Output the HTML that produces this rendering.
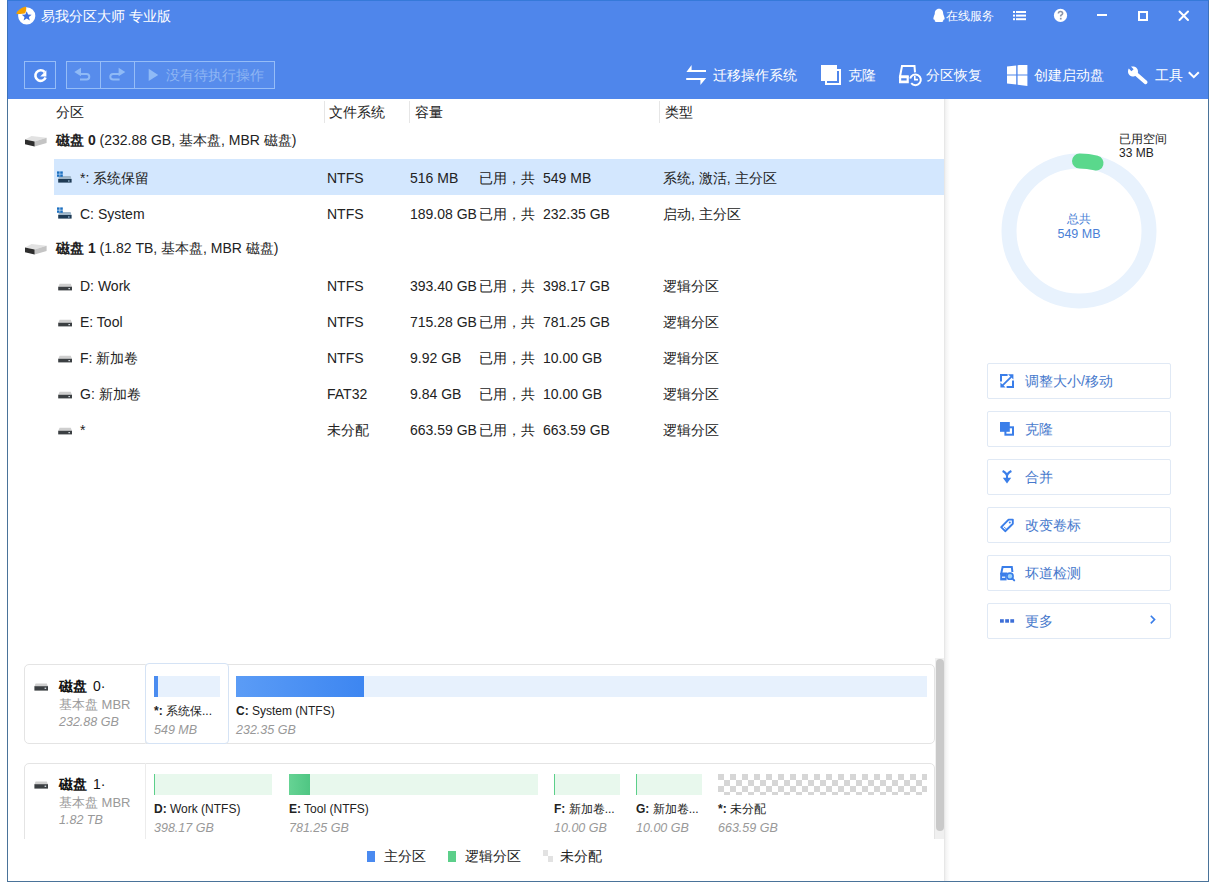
<!DOCTYPE html>
<html><head><meta charset="utf-8">
<style>
*{box-sizing:border-box;margin:0;padding:0}
html,body{width:1216px;height:889px;overflow:hidden;background:#fff;font-family:"Liberation Sans",sans-serif;color:#222;position:relative}
.a{position:absolute;white-space:nowrap;line-height:1}
#frame{position:absolute;left:7px;top:0;width:1202px;height:882px;border:1px solid #4a7399;border-top:none;background:#fff}
#hdr{position:absolute;left:7px;top:0;width:1202px;height:99px;background:#4f86eb;border-left:1px solid #3b72bb;border-right:1px solid #3b72bb;border-top:1px solid #3579d9}
.wt{color:#fff}
.tb{position:absolute;border:1px solid #96bdf7;height:28px;top:61px}
.col{font-size:14px;color:#222;top:105px}
.sep{position:absolute;top:101px;width:1px;height:22px;background:#e6e6e6}
.row{font-size:14px;color:#222}
.act{position:absolute;left:987px;width:184px;height:36px;border:1px solid #e0e9f5;border-radius:2px;background:#fff}
.act .t{position:absolute;left:37px;top:10px;font-size:14px;color:#4779cc;line-height:1;white-space:nowrap}
.card{position:absolute;border:1px solid #e4e4e4;border-radius:5px;background:#fff}
.bar{position:absolute;height:21px}
.pl{font-size:12px;color:#222}
.ps{font-size:12.5px;color:#999;font-style:italic}
</style></head><body>
<div id="frame"></div>
<div id="hdr"></div>

<!-- title bar -->
<div class="a wt" style="left:41px;top:9px;font-size:14px">易我分区大师 专业版</div>
<div class="a wt" style="left:946px;top:10px;font-size:12px">在线服务</div>

<!-- toolbar -->
<div class="tb" style="left:24px;width:32px"></div>
<div class="tb" style="left:66px;width:209px;background:rgba(255,255,255,0.05)"></div>
<div class="a" style="left:100px;top:61px;width:1px;height:28px;background:#96bdf7"></div>
<div class="a" style="left:134px;top:61px;width:1px;height:28px;background:#96bdf7"></div>
<div class="a" style="left:166px;top:68px;font-size:14px;color:#8fb6f3">没有待执行操作</div>

<div class="a wt" style="left:713px;top:68px;font-size:14px">迁移操作系统</div>
<div class="a wt" style="left:848px;top:68px;font-size:14px">克隆</div>
<div class="a wt" style="left:926px;top:68px;font-size:14px">分区恢复</div>
<div class="a wt" style="left:1034px;top:68px;font-size:14px">创建启动盘</div>
<div class="a wt" style="left:1155px;top:68px;font-size:14px">工具</div>


<!-- logo -->
<svg class="a" style="left:14px;top:4px" width="26" height="24" viewBox="0 0 26 24">
 <circle cx="12.7" cy="11.9" r="8.6" fill="#fff"/>
 <path d="M2.2 9.8 C3.5 6.2 7.5 3.2 12.0 2.4 C12.6 5.2 12.2 7.8 10.6 9.6 C8.0 10.2 4.8 10.2 2.2 9.8Z" fill="#f5a000"/>
 <path d="M12.7 7.2 L14.1 10.6 L17.6 10.8 L14.9 13.1 L15.8 16.6 L12.7 14.6 L9.6 16.6 L10.5 13.1 L7.8 10.8 L11.3 10.6Z" fill="#3d6fe0"/>
</svg>
<!-- QQ -->
<svg class="a" style="left:932px;top:8px" width="14" height="15" viewBox="0 0 14 15">
 <path d="M7 0.8 C10 0.8 11.2 3.2 11.2 5.6 C11.2 6.6 11.9 7.6 12.4 9.2 C12.9 10.8 12.4 12 11.8 11.4 C11.4 12.4 10.8 13 10.4 13.4 L11.6 14 L2.4 14 L3.6 13.4 C3.2 13 2.6 12.4 2.2 11.4 C1.6 12 1.1 10.8 1.6 9.2 C2.1 7.6 2.8 6.6 2.8 5.6 C2.8 3.2 4 0.8 7 0.8Z" fill="#fff"/>
</svg>
<!-- list -->
<svg class="a" style="left:1012px;top:10px" width="16" height="12" viewBox="0 0 16 12">
 <rect x="1" y="1" width="2" height="2" fill="#fff"/><rect x="4" y="1" width="10" height="2" fill="#fff"/>
 <rect x="1" y="4.6" width="2" height="2" fill="#fff"/><rect x="4" y="4.6" width="10" height="2" fill="#fff"/>
 <rect x="1" y="8.2" width="2" height="2" fill="#fff"/><rect x="4" y="8.2" width="10" height="2" fill="#fff"/>
</svg>
<!-- help -->
<svg class="a" style="left:1052px;top:7px" width="17" height="17" viewBox="0 0 17 17">
 <circle cx="8.5" cy="8.4" r="6.6" fill="#fff"/>
 <path d="M6.4 6.6 C6.4 5.2 7.3 4.5 8.5 4.5 C9.8 4.5 10.6 5.3 10.6 6.4 C10.6 7.6 9.2 7.9 8.7 8.8 L8.7 9.6" fill="none" stroke="#8a94a8" stroke-width="1.6"/>
 <rect x="7.9" y="10.8" width="1.7" height="1.7" fill="#8a94a8"/>
</svg>
<!-- min max close -->
<div class="a" style="left:1097px;top:14px;width:10px;height:2px;background:#fff"></div>
<div class="a" style="left:1138px;top:11px;width:10px;height:10px;border:2px solid #fff"></div>
<svg class="a" style="left:1177px;top:9px" width="14" height="14" viewBox="0 0 14 14">
 <path d="M2.5 2.5 L11 11 M11 2.5 L2.5 11" stroke="#fff" stroke-width="2" stroke-linecap="round"/>
</svg>

<!-- refresh -->
<svg class="a" style="left:32px;top:67px" width="17" height="17" viewBox="0 0 17 17">
 <path d="M13.6 10.6 A5.3 5.3 0 1 1 12.6 5.0" fill="none" stroke="#fff" stroke-width="2.6"/>
 <path d="M14.4 3.2 L14.4 9.6 L8.2 9.6Z" fill="#fff"/>
</svg>
<!-- undo redo -->
<svg class="a" style="left:66px;top:61px" width="100" height="28" viewBox="0 0 100 28">
 <path d="M8.3 11 L15 6.8 L15 15.2Z" fill="#8fbaf6"/>
 <path d="M13 13 L20.5 13 A2.8 2.8 0 0 1 20.5 18.6 L14 18.6" fill="none" stroke="#8fbaf6" stroke-width="2"/>
 <path d="M59.3 11 L52.6 6.8 L52.6 15.2Z" fill="#8fbaf6"/>
 <path d="M54.6 13 L47.1 13 A2.8 2.8 0 0 0 47.1 18.6 L53.6 18.6" fill="none" stroke="#8fbaf6" stroke-width="2"/>
 <path d="M82.7 7.7 L92.2 13.9 L82.7 20Z" fill="#8fbaf6"/>
</svg>

<!-- migrate -->
<svg class="a" style="left:686px;top:64px" width="21" height="22" viewBox="686 64 21 22">
 <path d="M686.4 72 L691.6 65 L691.6 70 L706 70 L706 72Z M686.2 78 L706.2 78 L700.4 85 L700.4 80 L686.2 80Z" fill="#fff"/>
</svg>
<!-- clone -->
<svg class="a" style="left:820px;top:64px" width="22" height="22" viewBox="820 64 22 22">
 <rect x="826" y="70" width="14" height="14" fill="none" stroke="#fff" stroke-width="2"/>
 <rect x="821" y="65" width="16" height="16" fill="#fff"/>
</svg>
<!-- recovery -->
<svg class="a" style="left:897px;top:63px" width="26" height="25" viewBox="897 63 26 25">
 <path d="M908.5 76.5 L900 76.5 L902 66 L914.5 66 L915 72.4" fill="none" stroke="#fff" stroke-width="2"/>
 <path d="M899 75.6 L908.8 75.6 L908.8 83.2 L899 83.2Z M901.2 78.2 L901.2 80.6 L906.6 80.6 L906.6 78.2Z" fill="#fff" fill-rule="evenodd"/>
 <path d="M910.2 78.4 A5.4 5.4 0 1 1 911.2 83.2" fill="none" stroke="#fff" stroke-width="2"/>
 <path d="M914.8 76 L914.8 79.6 L918 79.6" fill="none" stroke="#fff" stroke-width="1.6"/>
</svg>
<!-- windows -->
<svg class="a" style="left:1007px;top:65px" width="21" height="21" viewBox="0 0 21 21">
 <path d="M0 1.6 L9.2 0.4 L9.2 9.4 L0 9.4Z M10.6 0.2 L20.4 -1 L20.4 9.4 L10.6 9.4Z M0 10.6 L9.2 10.6 L9.2 19.6 L0 18.4Z M10.6 10.6 L20.4 10.6 L20.4 21 L10.6 19.8Z" fill="#fff"/>
</svg>
<!-- wrench -->
<svg class="a" style="left:1126px;top:64px" width="24" height="22" viewBox="1126 64 24 22">
 <path d="M1135.5 73.5 L1145.6 82.2" stroke="#fff" stroke-width="3.8" stroke-linecap="round"/>
 <path d="M1133 66.4 C1135.9 66.4 1138 68.6 1138 71.4 C1138 74.2 1135.9 76.4 1133 76.4 C1130.1 76.4 1128 74.2 1128 71.4 C1128 70.2 1128.3 69.4 1128.8 68.6 L1131.4 71.2 L1133.6 69.2 L1131 66.6 C1131.6 66.5 1132.3 66.4 1133 66.4Z" fill="#fff"/>
</svg>
<!-- chevron -->
<svg class="a" style="left:1187px;top:70px" width="14" height="10" viewBox="0 0 14 10">
 <path d="M1.8 2.2 L6.8 7.2 L11.8 2.2" fill="none" stroke="#fff" stroke-width="2"/>
</svg>

<!-- column headers -->
<div class="a col" style="left:56px">分区</div>
<div class="sep" style="left:324px"></div>
<div class="a col" style="left:329px">文件系统</div>
<div class="sep" style="left:409px"></div>
<div class="a col" style="left:415px">容量</div>
<div class="sep" style="left:659px"></div>
<div class="a col" style="left:665px">类型</div>

<!-- selected row -->
<div class="a" style="left:54px;top:159px;width:890px;height:36px;background:#d3e7fe"></div>

<!-- disk 0 -->
<div class="a row" style="left:56px;top:133px"><b>磁盘 0</b> (232.88 GB, 基本盘, MBR 磁盘)</div>
<div class="a row" style="left:80px;top:171px">*: 系统保留</div>
<div class="a row" style="left:327px;top:171px">NTFS</div>
<div class="a row" style="left:410px;top:171px">516 MB</div>
<div class="a row" style="left:479px;top:171px">已用，共</div>
<div class="a row" style="left:543px;top:171px">549 MB</div>
<div class="a row" style="left:663px;top:171px">系统, 激活, 主分区</div>

<div class="a row" style="left:80px;top:207px">C: System</div>
<div class="a row" style="left:327px;top:207px">NTFS</div>
<div class="a row" style="left:410px;top:207px">189.08 GB</div>
<div class="a row" style="left:479px;top:207px">已用，共</div>
<div class="a row" style="left:543px;top:207px">232.35 GB</div>
<div class="a row" style="left:663px;top:207px">启动, 主分区</div>

<div class="a row" style="left:56px;top:241px"><b>磁盘 1</b> (1.82 TB, 基本盘, MBR 磁盘)</div>

<div class="a row" style="left:80px;top:279px">D: Work</div>
<div class="a row" style="left:327px;top:279px">NTFS</div>
<div class="a row" style="left:410px;top:279px">393.40 GB</div>
<div class="a row" style="left:479px;top:279px">已用，共</div>
<div class="a row" style="left:543px;top:279px">398.17 GB</div>
<div class="a row" style="left:663px;top:279px">逻辑分区</div>

<div class="a row" style="left:80px;top:315px">E: Tool</div>
<div class="a row" style="left:327px;top:315px">NTFS</div>
<div class="a row" style="left:410px;top:315px">715.28 GB</div>
<div class="a row" style="left:479px;top:315px">已用，共</div>
<div class="a row" style="left:543px;top:315px">781.25 GB</div>
<div class="a row" style="left:663px;top:315px">逻辑分区</div>

<div class="a row" style="left:80px;top:351px">F: 新加卷</div>
<div class="a row" style="left:327px;top:351px">NTFS</div>
<div class="a row" style="left:410px;top:351px">9.92 GB</div>
<div class="a row" style="left:479px;top:351px">已用，共</div>
<div class="a row" style="left:543px;top:351px">10.00 GB</div>
<div class="a row" style="left:663px;top:351px">逻辑分区</div>

<div class="a row" style="left:80px;top:387px">G: 新加卷</div>
<div class="a row" style="left:327px;top:387px">FAT32</div>
<div class="a row" style="left:410px;top:387px">9.84 GB</div>
<div class="a row" style="left:479px;top:387px">已用，共</div>
<div class="a row" style="left:543px;top:387px">10.00 GB</div>
<div class="a row" style="left:663px;top:387px">逻辑分区</div>

<div class="a row" style="left:80px;top:423px">*</div>
<div class="a row" style="left:327px;top:423px">未分配</div>
<div class="a row" style="left:410px;top:423px">663.59 GB</div>
<div class="a row" style="left:479px;top:423px">已用，共</div>
<div class="a row" style="left:543px;top:423px">663.59 GB</div>
<div class="a row" style="left:663px;top:423px">逻辑分区</div>


<!-- list icons -->
<svg class="a" style="left:24px;top:135px" width="24" height="12" viewBox="24 135 24 12">
 <path d="M25 139.4 L31.5 136 L46.6 137.8 L34.6 141.4Z" fill="#e2e2e2"/>
 <path d="M34.6 141.4 L46.6 137.8 L46.6 143 L34.6 146.4Z" fill="#c4c4c4"/>
 <path d="M25 139.4 L34.6 141.4 L34.6 146.4 L25 144.2Z" fill="#2e2e2e"/>
</svg>
<svg class="a" style="left:24px;top:243px" width="24" height="12" viewBox="24 135 24 12">
 <path d="M25 139.4 L31.5 136 L46.6 137.8 L34.6 141.4Z" fill="#e2e2e2"/>
 <path d="M34.6 141.4 L46.6 137.8 L46.6 143 L34.6 146.4Z" fill="#c4c4c4"/>
 <path d="M25 139.4 L34.6 141.4 L34.6 146.4 L25 144.2Z" fill="#2e2e2e"/>
</svg>
<svg class="a" style="left:56px;top:171px" width="17" height="14" viewBox="0 0 17 14">
 <path d="M3 5 L14.6 5 L15.6 8.2 L2.2 8.2Z" fill="#9fb6c9"/>
 <rect x="2.2" y="8" width="13.4" height="3.6" fill="#1f3b55"/>
 <rect x="12" y="9.4" width="1.6" height="1.2" fill="#9fc0dc"/>
 <rect x="1" y="0.4" width="2.6" height="2.4" fill="#1b6fc0"/><rect x="4.2" y="0.4" width="2.6" height="2.4" fill="#1b6fc0"/>
 <rect x="1" y="3.4" width="2.6" height="2.4" fill="#1b6fc0"/><rect x="4.2" y="3.4" width="2.6" height="2.4" fill="#1b6fc0"/>
</svg>
<svg class="a" style="left:56px;top:207px" width="17" height="14" viewBox="0 0 17 14">
 <path d="M3 5 L14.6 5 L15.6 8.2 L2.2 8.2Z" fill="#9fb6c9"/>
 <rect x="2.2" y="8" width="13.4" height="3.6" fill="#1f3b55"/>
 <rect x="12" y="9.4" width="1.6" height="1.2" fill="#9fc0dc"/>
 <rect x="1" y="0.4" width="2.6" height="2.4" fill="#1b6fc0"/><rect x="4.2" y="0.4" width="2.6" height="2.4" fill="#1b6fc0"/>
 <rect x="1" y="3.4" width="2.6" height="2.4" fill="#1b6fc0"/><rect x="4.2" y="3.4" width="2.6" height="2.4" fill="#1b6fc0"/>
</svg>
<svg class="a" style="left:57px;top:283px" width="16" height="10" viewBox="0 0 16 10">
 <path d="M2.6 0.8 L13.8 0.8 L15 4 L1.2 4Z" fill="#cfcfcf"/>
 <rect x="1.2" y="3.8" width="13.8" height="3.6" fill="#3b3f42"/>
 <rect x="11.4" y="5" width="1.6" height="1.2" fill="#cfd6dc"/>
</svg>
<svg class="a" style="left:57px;top:319px" width="16" height="10" viewBox="0 0 16 10">
 <path d="M2.6 0.8 L13.8 0.8 L15 4 L1.2 4Z" fill="#cfcfcf"/>
 <rect x="1.2" y="3.8" width="13.8" height="3.6" fill="#3b3f42"/>
 <rect x="11.4" y="5" width="1.6" height="1.2" fill="#cfd6dc"/>
</svg>
<svg class="a" style="left:57px;top:355px" width="16" height="10" viewBox="0 0 16 10">
 <path d="M2.6 0.8 L13.8 0.8 L15 4 L1.2 4Z" fill="#cfcfcf"/>
 <rect x="1.2" y="3.8" width="13.8" height="3.6" fill="#3b3f42"/>
 <rect x="11.4" y="5" width="1.6" height="1.2" fill="#cfd6dc"/>
</svg>
<svg class="a" style="left:57px;top:391px" width="16" height="10" viewBox="0 0 16 10">
 <path d="M2.6 0.8 L13.8 0.8 L15 4 L1.2 4Z" fill="#cfcfcf"/>
 <rect x="1.2" y="3.8" width="13.8" height="3.6" fill="#3b3f42"/>
 <rect x="11.4" y="5" width="1.6" height="1.2" fill="#cfd6dc"/>
</svg>
<svg class="a" style="left:57px;top:427px" width="16" height="10" viewBox="0 0 16 10">
 <path d="M2.6 0.8 L13.8 0.8 L15 4 L1.2 4Z" fill="#cfcfcf"/>
 <rect x="1.2" y="3.8" width="13.8" height="3.6" fill="#3b3f42"/>
 <rect x="11.4" y="5" width="1.6" height="1.2" fill="#cfd6dc"/>
</svg>

<!-- right panel divider -->
<div class="a" style="left:944px;top:99px;width:6px;height:782px;background:linear-gradient(90deg,#e2e2e2,#f4f4f4 30%,#fff)"></div>

<!-- donut -->
<div class="a" style="left:1119px;top:133px;font-size:12px;color:#222">已用空间</div>
<div class="a" style="left:1119px;top:147px;font-size:12px;color:#222">33 MB</div>
<svg class="a" style="left:1000px;top:152px" width="158" height="158">
 <circle cx="79" cy="79" r="70" fill="none" stroke="#e8f2fd" stroke-width="15"/>
 <path d="M79.5 9 A70 70 0 0 1 96 11.1" fill="none" stroke="#5ad88c" stroke-width="15" stroke-linecap="round"/>
</svg>
<div class="a" style="left:1040px;top:213px;width:78px;text-align:center;font-size:12px;color:#4a7fd6">总共</div>
<div class="a" style="left:1040px;top:228px;width:78px;text-align:center;font-size:12.5px;color:#4a7fd6">549 MB</div>

<!-- action buttons -->
<div class="act" style="top:363px"><div class="t">调整大小/移动</div></div>
<div class="act" style="top:411px"><div class="t">克隆</div></div>
<div class="act" style="top:459px"><div class="t">合并</div></div>
<div class="act" style="top:507px"><div class="t">改变卷标</div></div>
<div class="act" style="top:555px"><div class="t">坏道检测</div></div>
<div class="act" style="top:603px"><div class="t">更多</div></div>


<!-- action icons -->
<svg class="a" style="left:999px;top:373px" width="16" height="16" viewBox="999 373 16 16">
 <path d="M1007.6 375 L1001 375 L1001 381.6 M1006.6 387 L1013 387 L1013 380.6" fill="none" stroke="#3a7ee9" stroke-width="2"/>
 <path d="M1002.6 385.4 L1011.2 376.8" stroke="#3a7ee9" stroke-width="1.8"/>
 <path d="M1013.4 374.2 L1013.4 379.6 L1008 374.2Z M1000.4 387.6 L1000.4 382.4 L1005.6 387.6Z" fill="#3a7ee9"/>
</svg>
<svg class="a" style="left:999px;top:421px" width="16" height="16" viewBox="999 421 16 16">
 <rect x="1005.4" y="427.3" width="7.6" height="7.4" fill="none" stroke="#3a7ee9" stroke-width="2"/>
 <rect x="1000" y="422" width="9.8" height="9.8" fill="#3a7ee9"/>
</svg>
<svg class="a" style="left:1000px;top:469px" width="14" height="16" viewBox="1000 469 14 16">
 <path d="M1002.6 471 C1004.6 472 1007 473.6 1007 476.6 L1007 479.4 M1011.4 471 C1009.4 472 1007 473.6 1007 476.6" fill="none" stroke="#3a7ee9" stroke-width="2"/>
 <path d="M1002.8 477.8 L1011.2 477.8 L1007 483.6Z" fill="#3a7ee9"/>
</svg>
<svg class="a" style="left:999px;top:517px" width="16" height="16" viewBox="999 517 16 16">
 <path d="M1008.6 519.6 L1012.8 519.6 L1012.8 523.8 L1005.2 531.2 L1001.2 527.2Z" fill="none" stroke="#3a7ee9" stroke-width="1.9" stroke-linejoin="round"/>
 <circle cx="1009.8" cy="522.6" r="1" fill="#3a7ee9"/>
 <path d="M1004 526.8 L1006 528.8" stroke="#3a7ee9" stroke-width="1"/>
</svg>
<svg class="a" style="left:999px;top:565px" width="17" height="17" viewBox="999 565 17 17">
 <path d="M1007.4 573.6 L1001.2 573.6 L1002.6 567 L1011.8 567 L1012.4 572" fill="none" stroke="#3a7ee9" stroke-width="2"/>
 <path d="M1000.2 573 L1006.6 573 L1006.6 580.4 L1000.2 580.4Z" fill="#3a7ee9"/>
 <rect x="1002" y="576.6" width="3.2" height="1.2" fill="#fff"/>
 <circle cx="1010" cy="576.2" r="3.1" fill="#9ed4fa" stroke="#3a7ee9" stroke-width="1.6"/>
 <path d="M1012.2 578.4 L1014.2 580.4" stroke="#3a7ee9" stroke-width="2" stroke-linecap="round"/>
</svg>
<svg class="a" style="left:1000px;top:619px" width="15" height="4" viewBox="0 0 15 4">
 <rect x="0" y="0.2" width="3.8" height="3.5" fill="#3d6fd8"/><rect x="5.2" y="0.2" width="3.8" height="3.5" fill="#3d6fd8"/><rect x="10.3" y="0.2" width="3.8" height="3.5" fill="#3d6fd8"/>
</svg>
<svg class="a" style="left:1149px;top:614px" width="8" height="12" viewBox="0 0 8 12">
 <path d="M1.8 1.8 L5.6 5.6 L1.8 9.4" fill="none" stroke="#3a7ee9" stroke-width="1.6"/>
</svg>

<!-- disk map -->
<div class="card" style="left:24px;top:664px;width:911px;height:80px"></div>
<div class="a" style="left:145px;top:664px;width:1px;height:80px;background:#ececec"></div>
<div class="a" style="left:145px;top:663px;width:84px;height:81px;border:1px solid #d5e3f5;border-radius:4px;background:#fff"></div>
<svg class="a" style="left:34px;top:683px" width="15" height="9" viewBox="0 0 15 9">
 <path d="M1.6 0.6 L12.8 0.6 L14 3.4 L0.4 3.4Z" fill="#cfcfcf"/>
 <rect x="0.4" y="3.2" width="13.6" height="4.4" fill="#3b3f42"/>
 <rect x="10.6" y="4.6" width="1.6" height="1.4" fill="#cfd6dc"/>
</svg>
<div class="a" style="left:59px;top:679px;font-size:14px;font-weight:bold;color:#111">磁盘 <span style="font-weight:normal;margin-left:2px">0·</span></div>
<div class="a" style="left:59px;top:698px;font-size:13px;color:#9a9a9a">基本盘 MBR</div>
<div class="a ps" style="left:59px;top:716px">232.88 GB</div>

<div class="bar" style="left:154px;top:676px;width:66px;background:#e7f1fd"></div>
<div class="bar" style="left:154px;top:676px;width:4px;background:#4a8cf0"></div>
<div class="a pl" style="left:154px;top:705px"><b>*:</b> 系统保...</div>
<div class="a ps" style="left:154px;top:724px">549 MB</div>

<div class="bar" style="left:236px;top:676px;width:691px;background:#e7f1fd"></div>
<div class="bar" style="left:236px;top:676px;width:128px;background:linear-gradient(90deg,#5b9cf6,#3d86f1)"></div>
<div class="a pl" style="left:236px;top:705px"><b>C:</b> System (NTFS)</div>
<div class="a ps" style="left:236px;top:724px">232.35 GB</div>

<div class="card" style="left:24px;top:763px;width:911px;height:100px"></div>
<div class="a" style="left:145px;top:763px;width:1px;height:80px;background:#ececec"></div>
<svg class="a" style="left:34px;top:781px" width="15" height="9" viewBox="0 0 15 9">
 <path d="M1.6 0.6 L12.8 0.6 L14 3.4 L0.4 3.4Z" fill="#cfcfcf"/>
 <rect x="0.4" y="3.2" width="13.6" height="4.4" fill="#3b3f42"/>
 <rect x="10.6" y="4.6" width="1.6" height="1.4" fill="#cfd6dc"/>
</svg>
<div class="a" style="left:59px;top:777px;font-size:14px;font-weight:bold;color:#111">磁盘 <span style="font-weight:normal;margin-left:2px">1·</span></div>
<div class="a" style="left:59px;top:796px;font-size:13px;color:#9a9a9a">基本盘 MBR</div>
<div class="a ps" style="left:59px;top:814px">1.82 TB</div>

<div class="bar" style="left:154px;top:774px;width:118px;background:#e8f8ed"></div>
<div class="bar" style="left:154px;top:774px;width:1px;background:#5ccf8a"></div>
<div class="a pl" style="left:154px;top:803px"><b>D:</b> Work (NTFS)</div>
<div class="a ps" style="left:154px;top:822px">398.17 GB</div>

<div class="bar" style="left:289px;top:774px;width:249px;background:#e8f8ed"></div>
<div class="bar" style="left:289px;top:774px;width:21px;background:linear-gradient(90deg,#66d394,#4fc683)"></div>
<div class="a pl" style="left:289px;top:803px"><b>E:</b> Tool (NTFS)</div>
<div class="a ps" style="left:289px;top:822px">781.25 GB</div>

<div class="bar" style="left:554px;top:774px;width:66px;background:#e8f8ed"></div>
<div class="bar" style="left:554px;top:774px;width:1px;background:#5ccf8a"></div>
<div class="a pl" style="left:554px;top:803px"><b>F:</b> 新加卷...</div>
<div class="a ps" style="left:554px;top:822px">10.00 GB</div>

<div class="bar" style="left:636px;top:774px;width:66px;background:#e8f8ed"></div>
<div class="bar" style="left:636px;top:774px;width:1px;background:#5ccf8a"></div>
<div class="a pl" style="left:636px;top:803px"><b>G:</b> 新加卷...</div>
<div class="a ps" style="left:636px;top:822px">10.00 GB</div>

<div class="bar" style="left:718px;top:774px;width:209px;background:conic-gradient(#fff 25%,#d6d6d6 0 50%,#fff 0 75%,#d6d6d6 0) 0 0/12px 12px"></div>
<div class="a pl" style="left:718px;top:803px"><b>*:</b> 未分配</div>
<div class="a ps" style="left:718px;top:822px">663.59 GB</div>

<!-- scrollbar -->
<div class="a" style="left:935px;top:658px;width:9px;height:181px;background:#f0f0f0"></div>
<div class="a" style="left:936px;top:659px;width:8px;height:172px;background:#c9c9c9;border-radius:4px"></div>

<!-- legend -->
<div class="a" style="left:8px;top:839px;width:936px;height:42px;background:#fff"></div>
<div class="a" style="left:367px;top:851px;width:8px;height:11px;background:#4a8af0"></div>
<div class="a" style="left:384px;top:849px;font-size:14px;color:#222">主分区</div>
<div class="a" style="left:448px;top:851px;width:8px;height:11px;background:#5ccf8a"></div>
<div class="a" style="left:465px;top:849px;font-size:14px;color:#222">逻辑分区</div>
<div class="a" style="left:543px;top:850px;width:5px;height:6px;background:#e2e2e2"></div><div class="a" style="left:548px;top:856px;width:5px;height:6px;background:#e2e2e2"></div>
<div class="a" style="left:560px;top:849px;font-size:14px;color:#222">未分配</div>

</body></html>
